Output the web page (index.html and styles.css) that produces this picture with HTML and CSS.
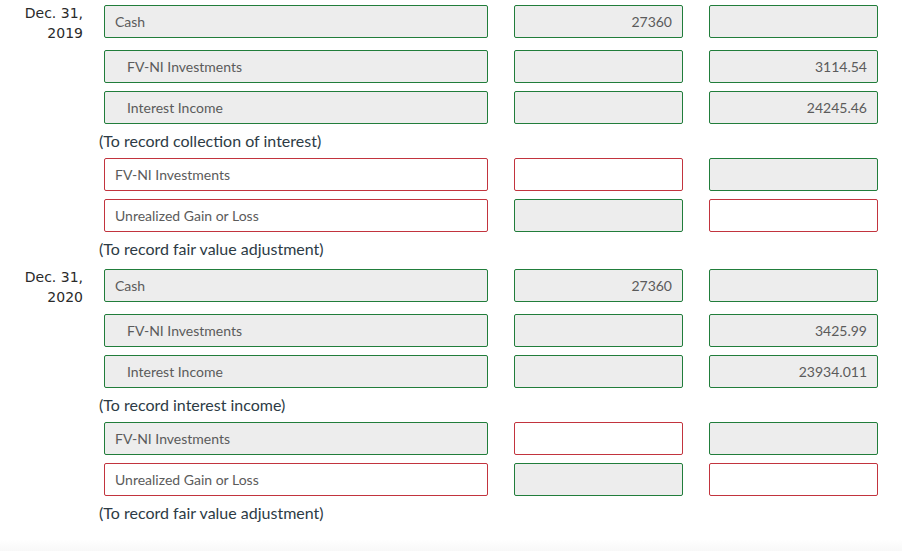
FILE: index.html
```html
<!DOCTYPE html>
<html lang="en">
  <head>
    <meta charset="UTF-8" />
    <meta name="viewport" content="width=device-width, initial-scale=1.0" />
    <title>Journal Entries</title>
    <link rel="stylesheet" href="styles.css">
  </head>
  <body>
    <div class="journal">
      <div class="entry">
        <div class="row">
          <div class="date">Dec. 31,<br />2019</div>
          <div class="field account correct">Cash</div>
          <div class="field amount correct">27360</div>
          <div class="field amount correct"></div>
        </div>
        <div class="row">
          <div class="date"></div>
          <div class="field account correct indent">FV-NI Investments</div>
          <div class="field amount correct"></div>
          <div class="field amount correct">3114.54</div>
        </div>
        <div class="row">
          <div class="date"></div>
          <div class="field account correct indent">Interest Income</div>
          <div class="field amount correct"></div>
          <div class="field amount correct">24245.46</div>
        </div>
        <p class="note">(To record collection of interest)</p>
        <div class="row">
          <div class="date"></div>
          <div class="field account wrong">FV-NI Investments</div>
          <div class="field amount wrong"></div>
          <div class="field amount correct"></div>
        </div>
        <div class="row">
          <div class="date"></div>
          <div class="field account wrong">Unrealized Gain or Loss</div>
          <div class="field amount correct"></div>
          <div class="field amount wrong"></div>
        </div>
        <p class="note">(To record fair value adjustment)</p>
      </div>

      <div class="entry">
        <div class="row">
          <div class="date">Dec. 31,<br />2020</div>
          <div class="field account correct">Cash</div>
          <div class="field amount correct">27360</div>
          <div class="field amount correct"></div>
        </div>
        <div class="row">
          <div class="date"></div>
          <div class="field account correct indent">FV-NI Investments</div>
          <div class="field amount correct"></div>
          <div class="field amount correct">3425.99</div>
        </div>
        <div class="row">
          <div class="date"></div>
          <div class="field account correct indent">Interest Income</div>
          <div class="field amount correct"></div>
          <div class="field amount correct">23934.011</div>
        </div>
        <p class="note">(To record interest income)</p>
        <div class="row">
          <div class="date"></div>
          <div class="field account correct">FV-NI Investments</div>
          <div class="field amount wrong"></div>
          <div class="field amount correct"></div>
        </div>
        <div class="row">
          <div class="date"></div>
          <div class="field account wrong">Unrealized Gain or Loss</div>
          <div class="field amount correct"></div>
          <div class="field amount wrong"></div>
        </div>
        <p class="note">(To record fair value adjustment)</p>
      </div>
    </div>
    <div class="footer-band"></div>
  </body>
</html>
```

FILE: styles.css
```css
* {
  margin: 0;
  padding: 0;
  box-sizing: border-box;
}
body {
  background: white;
  font-family: Lato, "Open Sans", sans-serif;
  height: 551px;
  overflow: hidden;
  position: relative;
}
.journal {
  padding-top: 1px;
}
.entry + .entry {
  margin-top: 3px;
}
.row {
  display: flex;
  align-items: flex-start;
  padding: 4px 0;
}
.date {
  width: 99px;
  padding-right: 16px;
  margin-top: -2px;
  text-align: right;
  font-family: "DejaVu Sans", Verdana, sans-serif;
  font-size: 14px;
  line-height: 20px;
  color: #2a2a2a;
  flex-shrink: 0;
}
.row:first-child .date {
  height: 39px;
}
.field {
  height: 33px;
  border: 1px solid #ccc;
  border-radius: 2px;
  display: flex;
  align-items: center;
  padding: 0 10px;
  font-size: 14px;
  color: #5b5b5b;
  flex-shrink: 0;
}
.field.correct {
  border-color: #217d3b;
  background: #ededed;
}
.field.wrong {
  border-color: #c2343e;
  background: white;
}
.account {
  width: 384px;
  margin-left: 5px;
}
.account.indent {
  padding-left: 22px;
}
.amount {
  width: 169px;
  margin-left: 26px;
  justify-content: flex-end;
}
.note {
  padding-left: 99px;
  font-size: 16px;
  line-height: 26px;
  color: #2d3b45;
}
.footer-band {
  position: absolute;
  left: 0;
  right: 0;
  bottom: 0;
  height: 12px;
  background: linear-gradient(#ffffff, #f8f8f8);
}
```
